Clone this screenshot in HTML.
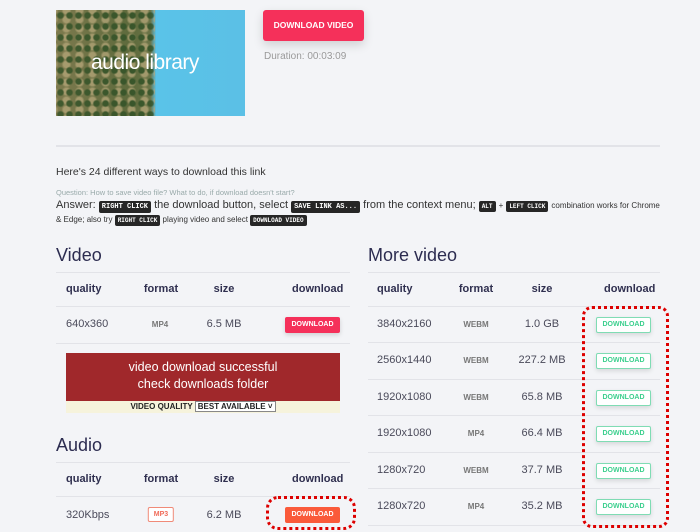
<!DOCTYPE html>
<html><head><meta charset="utf-8"><style>
*{margin:0;padding:0;box-sizing:border-box}
body{width:700px;height:532px;overflow:hidden;background:#f3f4f7;font-family:"Liberation Sans",sans-serif;color:#3a3a55;position:relative}
.a{position:absolute;white-space:nowrap}
.line{position:absolute;height:1px;background:#e2e3e8}
.h{font-size:18px;color:#2c2c50}
.th{font-size:11px;font-weight:bold;color:#2f2f4f}
.td{font-size:11px;color:#4a4a5a}
.fmt{font-size:8px;font-weight:bold;color:#777}
.k{background:#262626;color:#fff;font-family:"Liberation Mono",monospace;font-size:7px;font-weight:bold;padding:2px 3px;border-radius:2px}
.gb{position:absolute;width:55px;height:16px;border:1.5px solid #7fdcb4;border-radius:2px;color:#3ccf8e;font-size:7px;font-weight:bold;text-align:center;line-height:13px;background:#fff;box-shadow:0 2px 5px rgba(0,0,0,.12)}
.c{transform:translateX(-50%)}
</style></head><body>
<div class="a" style="left:56px;top:10px;width:189px;height:106px;background:linear-gradient(90deg,#7d7a4e 0%,#5d6a3c 40%,#6b7448 50%,#5ac3e8 53%,#5bc0e6 100%)"></div>
<div class="a" style="left:56px;top:10px;width:99px;height:106px;background:radial-gradient(circle,#2d4f25 2.5px,transparent 4px) 0 0/9px 11px,radial-gradient(circle,#b6a77a 3px,transparent 5px) 4px 5px/13px 9px;opacity:.75"></div>
<div class="a" style="left:91px;top:51px;font-size:21px;color:#fff;letter-spacing:-0.5px">audio library</div>
<div class="a" style="left:263px;top:10px;width:101px;height:31px;background:#f5305a;border-radius:3px;color:#fff;font-size:8.5px;font-weight:bold;text-align:center;line-height:31px;box-shadow:0 4px 10px rgba(0,0,0,.15)">DOWNLOAD VIDEO</div>
<div class="a" style="left:264px;top:51px;font-size:10px;color:#999">Duration: 00:03:09</div>
<div class="line" style="left:56px;top:145px;width:604px;height:2px"></div>
<div class="a" style="left:56px;top:166px;font-size:10.5px;color:#333">Here's 24 different ways to download this link</div>
<div class="a" style="left:56px;top:188px;font-size:7.5px;color:#9aa">Question: How to save video file? What to do, if download doesn't start?</div>
<div class="a" style="left:56px;top:199px;font-size:11px;color:#333">Answer: <span class="k">RIGHT CLICK</span> the download button, select <span class="k">SAVE LINK AS...</span> from the context menu; <span class="k" style="font-size:6px">ALT</span> <span style="font-size:8px">+</span> <span class="k" style="font-size:6px">LEFT CLICK</span> <span style="font-size:8px">combination works for Chrome</span></div>
<div class="a" style="left:56px;top:215px;font-size:8px;color:#333">&amp; Edge; also try <span class="k" style="font-size:6px">RIGHT CLICK</span> playing video and select <span class="k" style="font-size:6px">DOWNLOAD VIDEO</span></div>

<div class="a h" style="left:56px;top:245px">Video</div>
<div class="line" style="left:56px;top:272px;width:294px"></div>
<div class="a th" style="left:66px;top:283px">quality</div>
<div class="a th c" style="left:161px;top:283px">format</div>
<div class="a th c" style="left:224px;top:283px">size</div>
<div class="a th" style="left:292px;top:283px">download</div>
<div class="line" style="left:56px;top:306px;width:294px"></div>
<div class="a td" style="left:66px;top:318px">640x360</div>
<div class="a fmt c" style="left:160px;top:320px">MP4</div>
<div class="a td c" style="left:224px;top:318px">6.5 MB</div>
<div class="a" style="left:285px;top:317px;width:55px;height:16px;background:#f5305a;border-radius:2px;color:#fff;font-size:7px;font-weight:bold;text-align:center;line-height:16px;box-shadow:0 2px 5px rgba(0,0,0,.15)">DOWNLOAD</div>
<div class="line" style="left:56px;top:343px;width:294px"></div>
<div class="a" style="left:66px;top:353px;width:274px;height:48px;background:#a0282b;color:#fff;text-align:center;font-size:12.5px;line-height:17px;padding-top:6px">video download successful<br>check downloads folder</div>
<div class="a" style="left:66px;top:401px;width:274px;height:12px;background:#f6f3dc;font-size:8px;font-weight:bold;color:#222;text-align:center;line-height:12px">VIDEO QUALITY <span style="border:1px solid #888;background:#fff;padding:0 2px">BEST AVAILABLE ˅</span></div>

<div class="a h" style="left:56px;top:435px">Audio</div>
<div class="line" style="left:56px;top:462px;width:294px"></div>
<div class="a th" style="left:66px;top:473px">quality</div>
<div class="a th c" style="left:161px;top:473px">format</div>
<div class="a th c" style="left:224px;top:473px">size</div>
<div class="a th" style="left:292px;top:473px">download</div>
<div class="line" style="left:56px;top:496px;width:294px"></div>
<div class="a td" style="left:66px;top:509px">320Kbps</div>
<div class="a c" style="left:161px;top:507px;border:1px solid #f08a78;color:#f06c5a;font-size:7px;font-weight:bold;padding:3px 5px;border-radius:2px;background:#fff">MP3</div>
<div class="a td c" style="left:224px;top:509px">6.2 MB</div>
<div class="a" style="left:285px;top:507px;width:55px;height:16px;background:#fa5a3a;border-radius:2px;color:#fff;font-size:7px;font-weight:bold;text-align:center;line-height:16px">DOWNLOAD</div>
<div class="a" style="left:266px;top:496px;width:90px;height:34px;border:3px dotted #d00;border-radius:12px"></div>

<div class="a h" style="left:368px;top:245px">More video</div>
<div class="line" style="left:368px;top:272px;width:292px"></div>
<div class="a th" style="left:377px;top:283px">quality</div>
<div class="a th c" style="left:476px;top:283px">format</div>
<div class="a th c" style="left:542px;top:283px">size</div>
<div class="a th" style="left:604px;top:283px">download</div>
<div class="line" style="left:368px;top:306px;width:292px"></div>

<div class="a td" style="left:377px;top:318px">3840x2160</div><div class="a fmt c" style="left:476px;top:320px">WEBM</div><div class="a td c" style="left:542px;top:318px">1.0 GB</div><div class="gb" style="left:596px;top:317px">DOWNLOAD</div><div class="line" style="left:368px;top:342px;width:292px"></div>
<div class="a td" style="left:377px;top:354px">2560x1440</div><div class="a fmt c" style="left:476px;top:356px">WEBM</div><div class="a td c" style="left:542px;top:354px">227.2 MB</div><div class="gb" style="left:596px;top:353px">DOWNLOAD</div><div class="line" style="left:368px;top:379px;width:292px"></div>
<div class="a td" style="left:377px;top:391px">1920x1080</div><div class="a fmt c" style="left:476px;top:393px">WEBM</div><div class="a td c" style="left:542px;top:391px">65.8 MB</div><div class="gb" style="left:596px;top:390px">DOWNLOAD</div><div class="line" style="left:368px;top:415px;width:292px"></div>
<div class="a td" style="left:377px;top:427px">1920x1080</div><div class="a fmt c" style="left:476px;top:429px">MP4</div><div class="a td c" style="left:542px;top:427px">66.4 MB</div><div class="gb" style="left:596px;top:426px">DOWNLOAD</div><div class="line" style="left:368px;top:452px;width:292px"></div>
<div class="a td" style="left:377px;top:464px">1280x720</div><div class="a fmt c" style="left:476px;top:466px">WEBM</div><div class="a td c" style="left:542px;top:464px">37.7 MB</div><div class="gb" style="left:596px;top:463px">DOWNLOAD</div><div class="line" style="left:368px;top:488px;width:292px"></div>
<div class="a td" style="left:377px;top:500px">1280x720</div><div class="a fmt c" style="left:476px;top:502px">MP4</div><div class="a td c" style="left:542px;top:500px">35.2 MB</div><div class="gb" style="left:596px;top:499px">DOWNLOAD</div><div class="line" style="left:368px;top:525px;width:292px"></div>
<div class="a" style="left:582px;top:306px;width:87px;height:222px;border:3px dotted #d00;border-radius:10px"></div>
</body></html>
